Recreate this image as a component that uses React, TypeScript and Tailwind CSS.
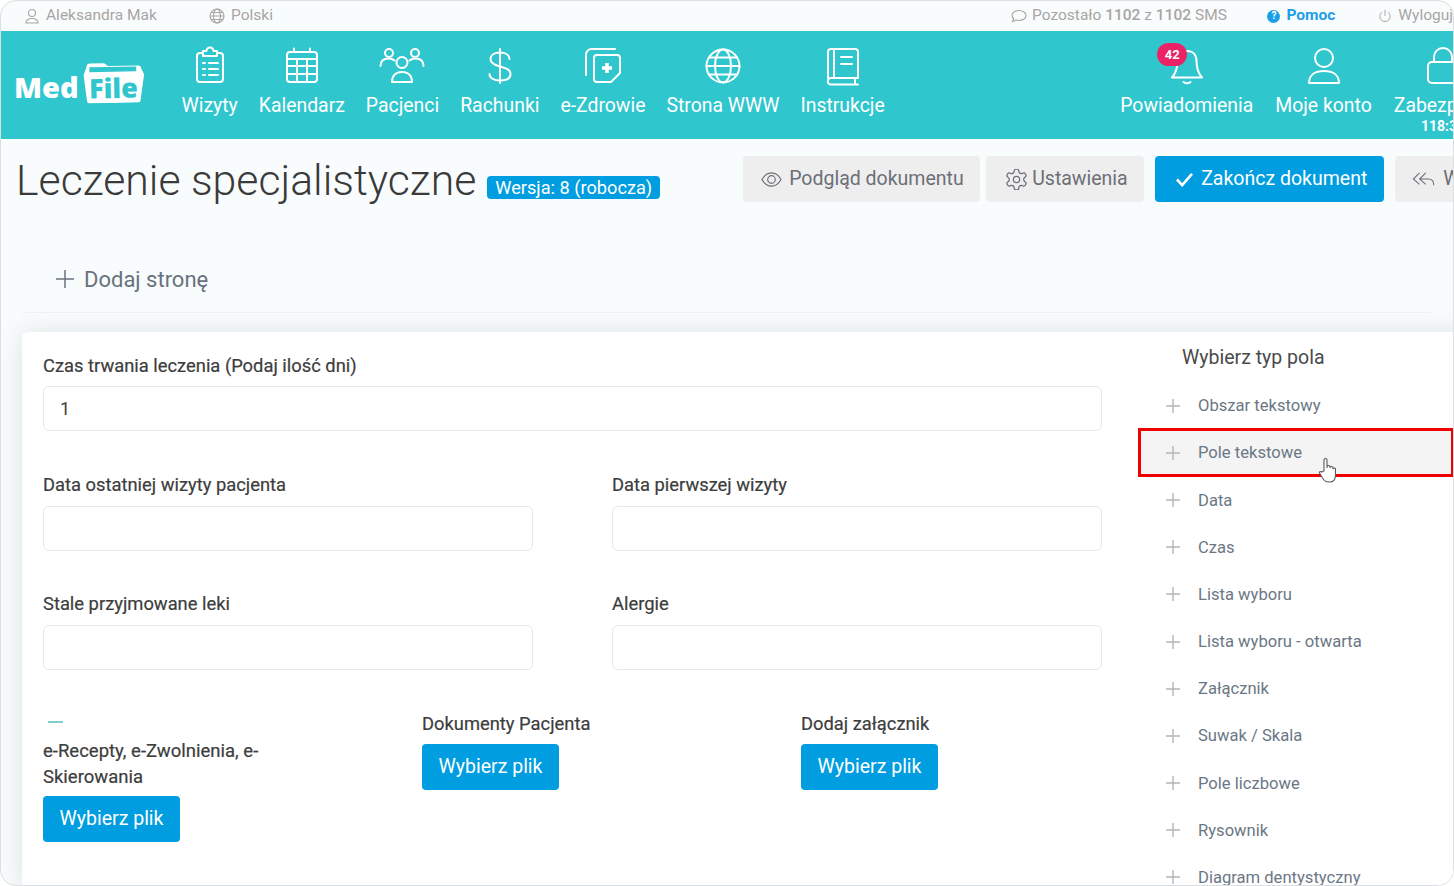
import React from "react";

const S = ({ children, className = "w-[48px] h-[48px]", w = 2 }: { children: React.ReactNode; className?: string; w?: number }) => (
  <svg viewBox="0 0 48 48" fill="none" stroke="currentColor" strokeWidth={w} strokeLinecap="round" strokeLinejoin="round" className={className}>
    {children}
  </svg>
);

const navLeft: { label: string; icon: React.ReactNode }[] = [
  {
    label: "Wizyty",
    icon: (
      <S>
        <path d="M17 11h-3a3 3 0 0 0-3 3v23a3 3 0 0 0 3 3h20a3 3 0 0 0 3-3V14a3 3 0 0 0-3-3h-3" />
        <path d="M17 9h3.500a3.500 3.500 0 0 1 7 0H31v5H17z" />
        <path d="M17 21h2M17 27h2M17 33h2M23 21h9M23 27h9M23 33h9" />
      </S>
    ),
  },
  {
    label: "Kalendarz",
    icon: (
      <S>
        <rect x="9" y="10" width="30" height="30" rx="3" />
        <path d="M16 6.500V10M32 6.500V10M9 17h30M9 24h30M9 32h30M19 17v23M29 17v23" />
      </S>
    ),
  },
  {
    label: "Pacjenci",
    icon: (
      <S>
        <circle cx="24" cy="20.500" r="5.500" />
        <circle cx="11" cy="11" r="4" />
        <circle cx="37" cy="11" r="4" />
        <path d="M14 40c0-6 3.500-10 10-10s10 4 10 10z" />
        <path d="M2.500 24c0-5 3-7.500 8-7.500 2.500 0 4.500.6 6 2M45.500 24c0-5-3-7.500-8-7.500-2.500 0-4.500.6-6 2" />
      </S>
    ),
  },
  {
    label: "Rachunki",
    icon: (
      <S>
        <path d="M33.500 17c0-4-4-6.500-9.500-6.500S14.500 13 14.500 17s4 6 9.500 7.500 10.500 3 10.500 7.500-4.500 6.500-10.500 6.500S13.500 36 13.500 32M24 7v34" />
      </S>
    ),
  },
  {
    label: "e-Zdrowie",
    icon: (
      <S>
        <path d="M36 7H12.500A5.500 5.500 0 0 0 7 12.500V33" />
        <path d="M18 13h20a3 3 0 0 1 3 3v15l-9 9H18a3 3 0 0 1-3-3V16a3 3 0 0 1 3-3z" />
        <path d="M28 21v10M23 26h10" strokeWidth="3.600" strokeLinecap="butt" />
      </S>
    ),
  },
  {
    label: "Strona WWW",
    icon: (
      <S>
        <circle cx="24" cy="24" r="16.500" />
        <ellipse cx="24" cy="24" rx="8" ry="16.500" />
        <path d="M7.500 24h33M10 15.500h28M10 32.500h28" />
      </S>
    ),
  },
  {
    label: "Instrukcje",
    icon: (
      <S>
        <path d="M9 36V10a3 3 0 0 1 3-3h24a3 3 0 0 1 3 3v26H12a3 3 0 0 0 0 6.500h27" />
        <path d="M15 7v29M22 15h11M22 22h11M36 36v6" />
      </S>
    ),
  },
];

const fields = ["Obszar tekstowy", "Pole tekstowe", "Data", "Czas", "Lista wyboru", "Lista wyboru - otwarta", "Załącznik", "Suwak / Skala", "Pole liczbowe", "Rysownik", "Diagram dentystyczny"];

const Label = ({ children }: { children: React.ReactNode }) => (
  <div className="text-[18.350px] leading-[28px] text-[#3d3d3d] [-webkit-text-stroke:0.2px_#3d3d3d]">{children}</div>
);
const Input = ({ value }: { value?: string }) => (
  <div className="h-[45px] w-full rounded-[6px] border border-[#e6e9ec] bg-white px-4 text-[18px] leading-[43px] text-[#3d3d3d]">{value}</div>
);
const FileBtn = () => (
  <div className="mt-[6px] flex h-[46px] w-[137px] items-center justify-center rounded-[4px] bg-[#009de0] text-[19.500px] text-white">Wybierz plik</div>
);
const Gray = ({ children, className }: { children: React.ReactNode; className: string }) => (
  <div className={"flex h-[46px] shrink-0 items-center rounded-[4px] bg-[#eeeeee] text-[19.500px] text-[#6c6f77] " + className}>{children}</div>
);

export default function App() {
  return (
    <div className="h-[886px] w-[1454px] overflow-hidden bg-white font-['Roboto',sans-serif]">
      <div className="relative h-[886px] w-[1454px] overflow-hidden rounded-[16px] border border-[#dcdfe2] bg-[#f9fcfd]">
        {/* top bar */}
        <div className="flex h-[30px] items-center whitespace-nowrap text-[15.500px] text-[#a8a5a3]">
          <div className="ml-[23px] flex w-[185px] items-center gap-[6px]">
            <svg viewBox="0 0 16 16" fill="none" stroke="currentColor" strokeWidth="1.100" className="h-[16px] w-[16px]"><circle cx="8" cy="5" r="3.500" /><path d="M2 15c0-3 2-4.500 6-4.500s6 1.500 6 4.500z" /></svg>
            Aleksandra Mak
          </div>
          <div className="flex items-center gap-[6px]">
            <svg viewBox="0 0 16 16" fill="none" stroke="currentColor" strokeWidth="1.100" className="h-[16px] w-[16px]"><circle cx="8" cy="8" r="7" /><ellipse cx="8" cy="8" rx="3.500" ry="7" /><path d="M1 8h14M2 4.500h12M2 11.500h12" /></svg>
            Polski
          </div>
          <div className="ml-auto flex w-[442px] items-center">
            <div className="flex w-[266px] items-center gap-[5px]">
              <svg viewBox="0 0 16 16" fill="none" stroke="currentColor" strokeWidth="1.100" className="h-[16px] w-[16px]"><path d="M8 2.500c4 0 7 2.300 7 5s-3 5-7 5c-1 0-2-.1-2.800-.4L1.500 13.500l1.200-2.700C1.600 9.900 1 8.800 1 7.500c0-2.700 3-5 7-5z" /></svg>
              <span>Pozostało <span className="font-medium">1102</span> z <span className="font-medium">1102</span> SMS</span>
            </div>
            <div className="flex w-[115px] items-center gap-[6px] font-bold text-[#1b9fe8]">
              <span className="flex h-[13px] w-[13px] items-center justify-center rounded-full bg-[#1b9fe8] text-[10px] leading-none text-white">?</span>
              Pomoc
            </div>
            <div className="flex items-center gap-[6px]">
              <svg viewBox="0 0 16 16" fill="none" stroke="currentColor" strokeWidth="1.100" strokeLinecap="round" className="h-[14px] w-[14px]"><path d="M4.500 3.500a6 6 0 1 0 7 0M8 1.500v6" /></svg>
              Wyloguj
            </div>
          </div>
        </div>

        {/* nav */}
        <div className="flex h-[108px] items-start whitespace-nowrap bg-[#2fc6ce] text-white">
          <div className="ml-[13px] mt-[28px] flex h-[50px] w-[167.500px] shrink-0 items-center">
            <span className="mt-[4px] font-['Open_Sans',sans-serif] text-[29px] font-extrabold leading-none">Med</span>
            <div className="relative -mt-[3px] ml-[4px] h-[41px] w-[62px] -rotate-[1deg]">
              <svg viewBox="0 0 62 42" className="absolute inset-0 h-full w-full" fill="#fff"><path d="M3 5a4 4 0 0 1 4-4h13a4 4 0 0 1 3 1.500L25 4h31a3 3 0 0 1 3 3l3 6-4 26a3 3 0 0 1-3 3H6a3 3 0 0 1-3-3L0 13z" /><path d="M6 5h48v5H6z" fill="#2fc6ce" /></svg>
              <span className="absolute left-[6px] top-[13px] font-['Open_Sans',sans-serif] text-[27px] font-extrabold leading-[26px] text-[#2fc6ce]">File</span>
            </div>
          </div>
          <div className="flex gap-[21px]">
            {navLeft.map((n) => (
              <div key={n.label} className="flex flex-col items-center">
                <div className="mt-[11px] flex h-[48px] items-center justify-center">{n.icon}</div>
                <div className="mt-[2px] text-[19.400px] leading-[28px]">{n.label}</div>
              </div>
            ))}
          </div>
          <div className="ml-[235.500px] flex gap-[22px]">
            <div className="relative flex flex-col items-center">
              <div className="mt-[11px] flex h-[48px] items-center justify-center">
                <S>
                  <path d="M24 9c-6 0-9.500 4-9.500 10 0 8-2.500 13-5.500 16.500h30c-3-3.500-5.500-8.500-5.500-16.500 0-6-3.500-10-9.500-10zM20.500 40c1.500 1.500 5.500 1.500 7 0" />
                </S>
              </div>
              <div className="absolute left-[37px] top-[12px] flex h-[23px] w-[30px] items-center justify-center rounded-[12px] bg-[#ec2266] text-[13px] font-bold text-white">42</div>
              <div className="mt-[2px] text-[19.400px] leading-[28px]">Powiadomienia</div>
            </div>
            <div className="flex flex-col items-center">
              <div className="mt-[11px] flex h-[48px] items-center justify-center">
                <S><circle cx="24" cy="16" r="9" /><path d="M9 41c0-8 6-12 15-12s15 4 15 12z" /></S>
              </div>
              <div className="mt-[2px] text-[19.400px] leading-[28px]">Moje konto</div>
            </div>
            <div className="flex flex-col items-center">
              <div className="mt-[11px] flex h-[48px] items-center justify-center">
                <S><rect x="9" y="20" width="30" height="21" rx="4" /><path d="M15 20v-5a9 9 0 0 1 18 0v5" /></S>
              </div>
              <div className="mt-[2px] text-[19.400px] leading-[28px]">Zabezpiecz</div>
              <div className="mt-[-2px] text-[14px] font-bold leading-[16px]">118:30</div>
            </div>
          </div>
        </div>

        {/* title row */}
        <div className="flex h-[106px] items-start whitespace-nowrap">
          <div className="ml-[15px] mt-[14px] text-[42.750px] font-light leading-[54px] text-[#3a3a3a]">Leczenie specjalistyczne</div>
          <div className="ml-[11px] mt-[37px] h-[23px] rounded-[4px] bg-[#009de0] px-[8px] text-[18.200px] leading-[23px] text-white">Wersja: 8 (robocza)</div>
          <div className="ml-[83px] mt-[17px] flex gap-[6px]">
            <Gray className="w-[237px] gap-[7px] pl-[18px]">
              <svg viewBox="0 0 22 16" fill="none" stroke="currentColor" strokeWidth="1.200" className="h-[17px] w-[21px]"><path d="M1 8c2.500-4.500 6-7 10-7s7.500 2.500 10 7c-2.500 4.500-6 7-10 7S3.500 12.500 1 8z" /><circle cx="11" cy="8" r="4" /></svg>
              Podgląd dokumentu
            </Gray>
            <Gray className="w-[158px] gap-[5px] pl-[20px]">
              <svg viewBox="2 2 20 20" fill="none" stroke="currentColor" strokeWidth="1.200" strokeLinejoin="round" className="h-[21px] w-[21px]"><circle cx="12" cy="12" r="3" /><path d="M12.220 2h-.440a2 2 0 0 0-2 2v.180a2 2 0 0 1-1 1.730l-.430.250a2 2 0 0 1-2 0l-.150-.080a2 2 0 0 0-2.730.730l-.220.380a2 2 0 0 0 .730 2.730l.150.100a2 2 0 0 1 1 1.720v.510a2 2 0 0 1-1 1.740l-.150.090a2 2 0 0 0-.730 2.730l.220.380a2 2 0 0 0 2.730.730l.150-.080a2 2 0 0 1 2 0l.430.250a2 2 0 0 1 1 1.730V20a2 2 0 0 0 2 2h.440a2 2 0 0 0 2-2v-.180a2 2 0 0 1 1-1.730l.430-.250a2 2 0 0 1 2 0l.150.080a2 2 0 0 0 2.730-.730l.220-.390a2 2 0 0 0-.730-2.730l-.150-.080a2 2 0 0 1-1-1.740v-.500a2 2 0 0 1 1-1.740l.150-.090a2 2 0 0 0 .730-2.730l-.220-.380a2 2 0 0 0-2.730-.730l-.150.080a2 2 0 0 1-2 0l-.430-.250a2 2 0 0 1-1-1.730V4a2 2 0 0 0-2-2z" /></svg>
              Ustawienia
            </Gray>
            <div className="ml-[5px] flex h-[46px] w-[229px] shrink-0 items-center gap-[7px] rounded-[4px] bg-[#009de0] pl-[20px] text-[19.500px] text-white">
              <svg viewBox="0 0 20 16" fill="none" stroke="currentColor" strokeWidth="2.800" className="h-[15px] w-[19px]"><path d="M2 8l5.500 6L18 2" /></svg>
              Zakończ dokument
            </div>
            <Gray className="ml-[5px] w-[120px] gap-[7px] pl-[17px]">
              <svg viewBox="0 0 26 18" fill="none" stroke="currentColor" strokeWidth="1.200" className="h-[16px] w-[24px]"><path d="M8 2L1 9l7 6M15 2L8 9l7 6M8 9h10c4 0 6 2.500 6 7" /></svg>
              Wróć
            </Gray>
          </div>
        </div>

        {/* add page */}
        <div className="mx-[22px] flex h-[68px] items-start border-b border-[#eef1f3] pl-[32px] pt-[9px] text-[22px] text-[#68727e]">
          <div className="flex h-[50px] items-center gap-[9px]">
            <svg viewBox="0 0 20 20" fill="none" stroke="currentColor" strokeWidth="1.500" className="h-[20px] w-[20px]"><path d="M10 1v18M1 10h18" /></svg>
            Dodaj stronę
          </div>
        </div>

        {/* card */}
        <div className="ml-[21px] mt-[19px] flex h-[560px] w-[1460px] rounded-[6px] bg-white shadow-[0_0_24px_rgba(60,80,90,0.15)]">
          <div className="ml-[21px] w-[1059px] shrink-0 pt-[20px]">
            <Label>Czas trwania leczenia (Podaj ilość dni)</Label>
            <div className="mt-[6px]"><Input value="1" /></div>
            <div className="mt-[40px] grid grid-cols-2 gap-x-[79px]">
              <div><Label>Data ostatniej wizyty pacjenta</Label><div className="mt-[7px]"><Input /></div></div>
              <div><Label>Data pierwszej wizyty</Label><div className="mt-[7px]"><Input /></div></div>
            </div>
            <div className="mt-[39px] grid grid-cols-2 gap-x-[79px]">
              <div><Label>Stale przyjmowane leki</Label><div className="mt-[7px]"><Input /></div></div>
              <div><Label>Alergie</Label><div className="mt-[7px]"><Input /></div></div>
            </div>
            <div className="mt-[40px] grid grid-cols-[379px_379px_1fr]">
              <div className="w-[260px]">
                <div className="mt-[11px] ml-[5px] h-[1.500px] w-[15px] bg-[#7fcfd0]" />
                <div className="mt-[15px]">
                  <div className="text-[18.500px] leading-[26px] text-[#3d3d3d] [-webkit-text-stroke:0.2px_#3d3d3d]">e-Recepty, e-Zwolnienia, e-Skierowania</div>
                </div>
                <div className="mt-[1px]"><FileBtn /></div>
              </div>
              <div><Label>Dokumenty Pacjenta</Label><FileBtn /></div>
              <div><Label>Dodaj załącznik</Label><FileBtn /></div>
            </div>
          </div>

          <div className="ml-[36px] w-[316px] shrink-0 pt-[12px]">
            <div className="pl-[44px] text-[19.500px] leading-[28px] text-[#4a4a4a]">Wybierz typ pola</div>
            <div className="mt-[11px]">
              {fields.map((f, i) => (
                <div key={f} className="relative flex h-[47.200px] items-center pl-[28px] text-[16.600px] text-[#6b7785]">
                  {i === 1 && <div className="absolute inset-x-0 -top-[2px] bottom-0 border-[3px] border-[#f00000] bg-[#f4f4f4]" />}
                  <svg viewBox="0 0 14 14" fill="none" stroke="#b3b6b9" strokeWidth="1.400" className="relative -mt-[2px] h-[14px] w-[14px]"><path d="M7 0v14M0 7h14" /></svg>
                  <span className="relative ml-[18px]">{f}</span>
                  {i === 1 && (
                    <svg viewBox="0 0 18 26" fill="#fff" stroke="#55585c" strokeWidth="1.100" className="absolute left-[180px] top-[27px] h-[26px] w-[18px]">
                      <path d="M6 14V3a1.500 1.500 0 0 1 3 0v8-1a1.500 1.500 0 0 1 3 0v1a1.500 1.500 0 0 1 3 0v1a1.300 1.300 0 0 1 2.500 0v6c0 4-2 7-6 7s-5-1-7-4l-3-5c-.5-1 1-2 2-1z" />
                    </svg>
                  )}
                </div>
              ))}
            </div>
          </div>
        </div>
      </div>
    </div>
  );
}
